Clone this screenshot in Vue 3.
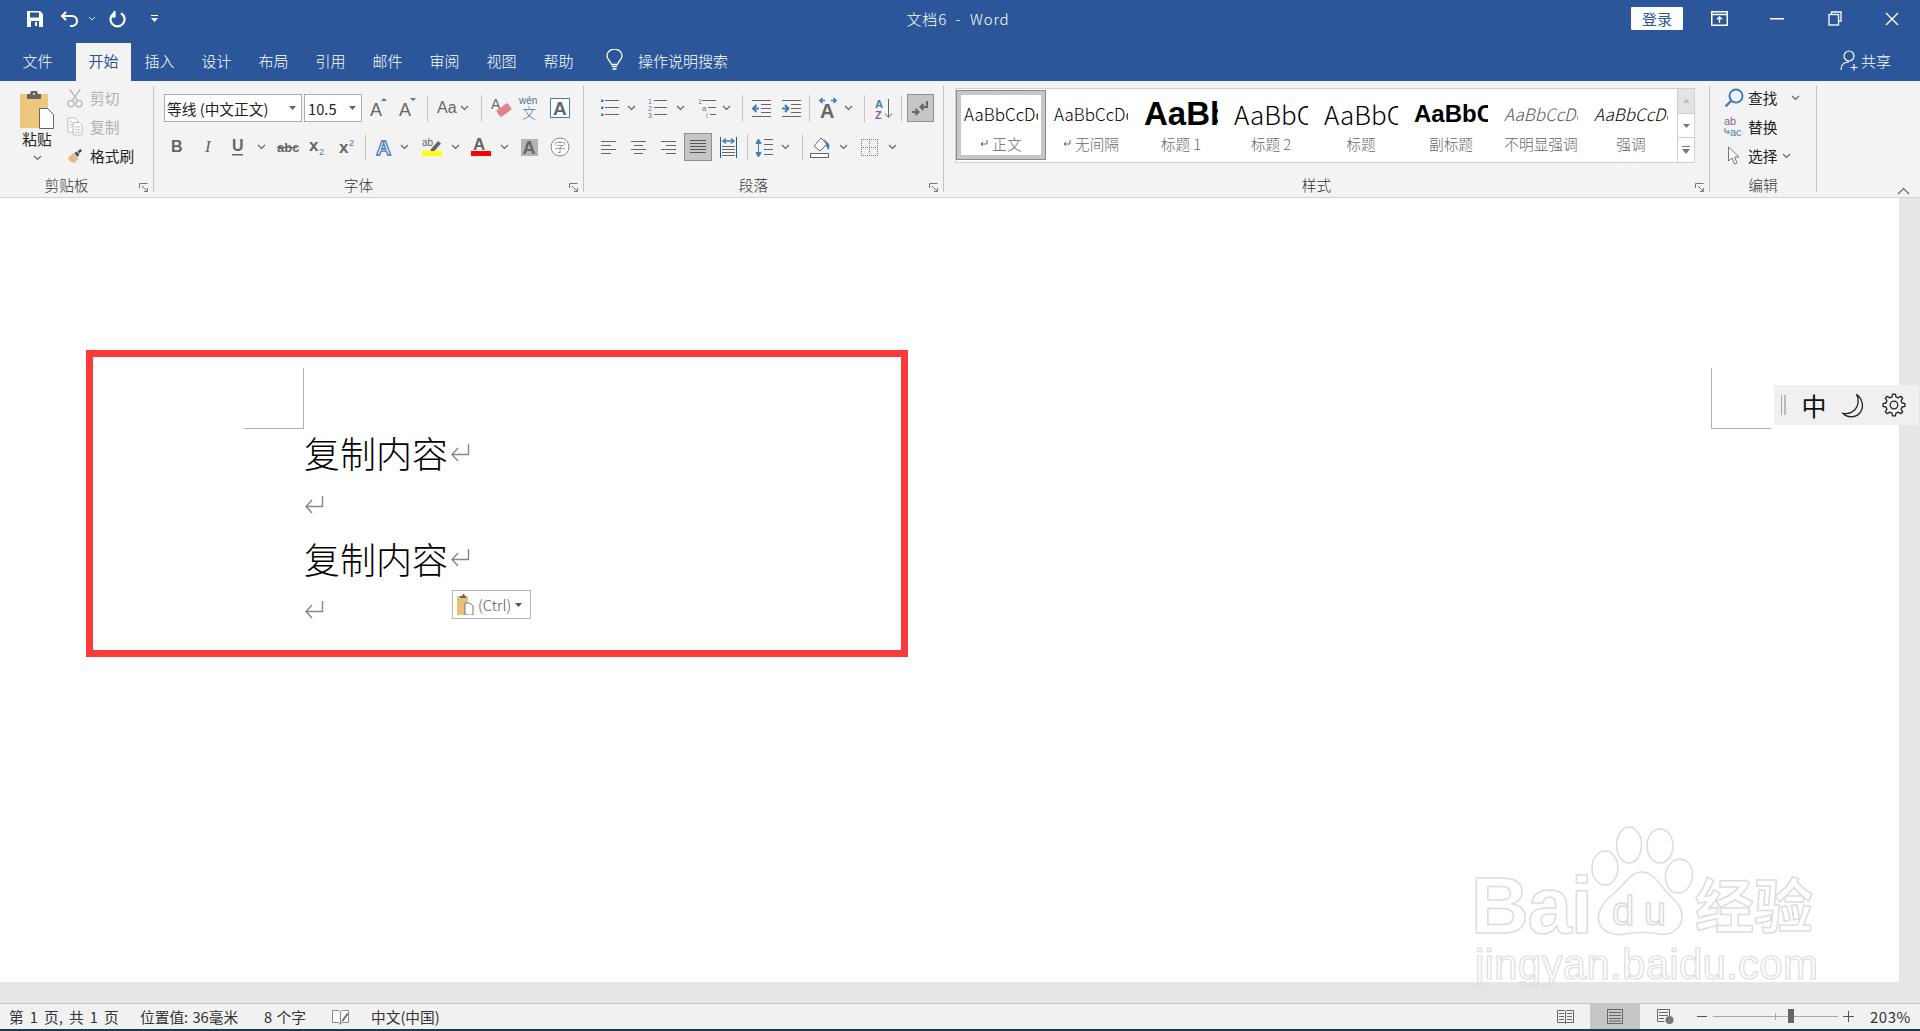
<script setup>
const G = '#666666'
const B = '#3f7cb8'
const SANS = 'Liberation Sans,sans-serif'
const T = (x, y, size, str, extra = '') =>
  `<text x="${x}" y="${y}" font-size="${size}" font-family="${SANS}" fill="${G}" ${extra}>${str}</text>`
const CJK = (x, y, size, str, fill = G) =>
  `<text x="${x}" y="${y}" font-size="${size}" font-family="Noto Sans CJK SC,sans-serif" fill="${fill}">${str}</text>`
const L = (arr, color = G) =>
  `<path d="${arr.map(([a, b, y]) => `M${a} ${y}.5H${b}`).join('')}" stroke="${color}" fill="none"/>`
const BOLD = 'font-weight="700"'

const icons = {
  chev: `<path d="M1 1l3.5 3.5L8 1" fill="none" stroke="#666" stroke-width="1.2"/>`,
  sep: `<rect width="1" height="27" fill="#c6c6c6"/>`,
  grow: T(2, 20, 18, 'A') + `<path d="M13 5l3-3 3 3z" fill="${B}"/>`,
  shrink: T(2, 20, 18, 'A') + `<path d="M13 2h6l-3 3z" fill="${B}"/>`,
  aa: T(4, 17, 16, 'Aa'),
  clear: T(2, 13, 14, 'A') + `<rect x="8" y="10" width="14" height="8" rx="1.5" fill="#ea7f8b" transform="rotate(-35 15 14)"/>`,
  phon: T(2, 8, 10, 'wén', `style="fill:#4d6f8f"`) + CJK(5, 22, 14, '文', B),
  boxa: `<rect x=".5" y=".5" width="19" height="19" fill="#fff" stroke="${B}"/>` + T(3, 17, 19, 'A', BOLD),
  b: T(0, 14, 16, 'B', BOLD),
  i: `<text x="1" y="14" font-size="17" font-style="italic" font-family="Liberation Serif,serif" fill="${G}">I</text>`,
  u: T(1, 13, 16, 'U', BOLD) + `<rect x="1" y="16" width="11" height="1.5" fill="${G}"/>`,
  abc: T(0, 14, 13, 'abc', BOLD) + `<rect y="9" width="20" height="1" fill="${G}"/>`,
  sub: T(0, 13, 17, 'x', BOLD) + T(10, 17, 9, '2', `style="fill:${B}"`),
  sup: T(0, 15, 17, 'x', BOLD) + T(10, 8, 9, '2', `style="fill:${B}"`),
  effect: `<text x="2" y="19" font-size="21" font-weight="700" font-family="${SANS}" fill="#fff" stroke="${B}" stroke-width="1.3">A</text>`,
  hl: T(0, 9, 10, 'ab') + `<path d="M9 12l7-8 3 2.5-7 8-4 1z" fill="${G}"/><rect y="14" width="20" height="5" fill="#ff0"/>`,
  color: T(2, 13, 17, 'A', BOLD) + `<rect y="14" width="20" height="5" fill="#f00"/>`,
  shade: `<rect width="17" height="17" fill="#b5b5b5"/>` + T(1.5, 15, 18, 'A', BOLD),
  circ: `<circle cx="10" cy="10" r="9" fill="#fff" stroke="#888"/>` + CJK(4, 14.5, 12, '字'),
  bullets: `<path d="M2 1.5h2.5v2.5H2zM2 8.5h2.5V11H2zM2 15.5h2.5V18H2z" fill="${B}"/>` + L([[6, 20, 2], [6, 20, 9], [6, 20, 16]]),
  num: T(1, 6, 7, '1', `style="fill:${B}"`) + T(1, 13, 7, '2', `style="fill:${B}"`) + T(1, 20, 7, '3', `style="fill:${B}"`) + L([[7, 20, 2], [7, 20, 9], [7, 20, 16]]),
  multi: T(0, 6, 7, '1', `style="fill:${B}"`) + T(4, 13, 8, 'a', `style="fill:${B}"`) + T(8, 20, 7, 'i', `style="fill:${B}"`) + L([[4, 18, 2], [10, 18, 9], [12, 18, 16]]),
  outdent: L([[0, 19, 1], [9, 19, 5], [9, 19, 9], [9, 19, 13], [0, 19, 17]]) + `<path d="M7 9.5H2M4.5 6L1 9.5 4.5 13" fill="none" stroke="${B}" stroke-width="2"/>`,
  indent: L([[0, 19, 1], [9, 19, 5], [9, 19, 9], [9, 19, 13], [0, 19, 17]]) + `<path d="M0 9.5h5M3 6l3.5 3.5L3 13" fill="none" stroke="${B}" stroke-width="2"/>`,
  cjk: `<path d="M3 3.5h5M14 3.5h5M5.5 1L3 3.5 5.5 6M16.5 1L19 3.5 16.5 6" fill="none" stroke="${B}" stroke-width="1.6"/>` + T(3, 21, 20, 'A', BOLD),
  sort: T(0, 10, 11, 'A', `style="fill:${B}" font-weight="700"`) + T(0, 21, 11, 'Z', `style="fill:#8a5aa8" font-weight="700"`) + `<path d="M13.5 1v18M10 15.5l3.5 4 3.5-4" fill="none" stroke="${G}"/>`,
  pil: `<rect x=".5" y=".5" width="26" height="27" fill="#c6c6c6" stroke="#8f8f8f"/><path d="M20 7v6h-6M16.5 10l-3 3 3 3" fill="none" stroke="#666" stroke-width="2"/><path d="M5 18h6M8.5 15l3 3-3 3" fill="none" stroke="#666" stroke-width="2"/>`,
  aleft: L([[0, 15, 1], [0, 10, 5], [0, 15, 9], [0, 10, 13]]),
  acenter: L([[0, 15, 1], [3, 12, 5], [0, 15, 9], [3, 12, 13]]),
  aright: L([[0, 15, 1], [5, 15, 5], [0, 15, 9], [5, 15, 13]]),
  just: `<rect x=".5" y=".5" width="27" height="27" fill="#c6c6c6" stroke="#8f8f8f"/>` + L([[6, 22, 7], [6, 22, 10], [6, 22, 13], [6, 22, 16], [6, 22, 19]], '#555'),
  dist: `<path d="M.5 0v21M16.5 0v21" stroke="#1f5a96"/><path d="M3 4h11M6 1.5L3 4l3 2.5M11 1.5L14 4l-3 2.5" fill="none" stroke="${B}" stroke-width="1.5"/>` + L([[2, 15, 9], [2, 15, 12], [2, 15, 15], [2, 15, 18]]),
  spacing: `<path d="M3.5 4v14M1 6.5L3.5 2 6 6.5zM1 15.5L3.5 20 6 15.5z" fill="${B}" stroke="${B}"/>` + L([[9, 18, 2], [9, 18, 7], [9, 18, 12], [9, 18, 17]]),
  fill: `<path d="M4 10l7-8 6 6-7 7z" fill="#fff" stroke="${G}"/><path d="M14 3l5 5c1 3 0 5-1 6l-2-5z" fill="${B}"/><rect x=".5" y="17.5" width="18" height="4" fill="#fff" stroke="${G}"/>`,
  border: `<path d="M.5 0v17M8.5 0v17M16.5 0v17M0 .5h17M0 8.5h17M0 16.5h17" stroke="#777" stroke-dasharray="1 1" fill="none"/>`
}

// A toolbar row is a list of tools with the centre of each; the gaps follow from it.
const row = (start, items) => {
  let x = start
  return items.map(([i, c, w = 20, h = 20]) => {
    const ml = c - w / 2 - x
    x = c + w / 2
    return { i, w, h, ml, key: i + c }
  })
}
const S = (c) => ['sep', c, 1, 27]
const C = (c) => ['chev', c, 9, 6]

const fontTop = row(362, [['grow', 379, 22, 24], ['shrink', 408, 22, 24], S(427), ['aa', 445, 24, 24], C(464), S(481), ['clear', 501, 24, 24], ['phon', 529, 24, 24], ['boxa', 560, 20, 20]])
const fontBottom = row(154, [['b', 177, 12, 18], ['i', 208, 8, 18], ['u', 237, 13, 18], C(261), ['abc', 287, 20, 18], ['sub', 317, 17, 18], ['sup', 347, 17, 18], S(365), ['effect', 384, 20, 22], C(404), ['hl', 432, 20, 20], C(455), ['color', 481, 20, 20], C(504), ['shade', 529, 17, 17], ['circ', 560, 20, 20]])
const paraTop = row(584, [['bullets', 609, 20, 20], C(631), ['num', 657, 20, 20], C(680), ['multi', 707, 18, 20], C(726), S(742), ['outdent', 761, 19, 19], ['indent', 791, 19, 19], S(809), ['cjk', 828, 22, 22], C(848), S(864), ['sort', 884, 18, 21], S(901), ['pil', 920, 27, 28]])
const paraBottom = row(584, [['aleft', 608, 15, 15], ['acenter', 638, 15, 15], ['aright', 668, 15, 15], ['just', 698, 28, 28], ['dist', 728, 17, 21], S(747), ['spacing', 764, 18, 21], C(785), S(802), ['fill', 820, 20, 22], C(843), ['border', 869, 17, 17], C(892)])

const tabs = ['插入', '设计', '布局', '引用', '邮件', '审阅', '视图', '帮助']
const styles = [
  { p: 'AaBbCcDc', l: '正文', cls: 'normal', ret: true, sel: true },
  { p: 'AaBbCcDc', l: '无间隔', cls: 'normal', ret: true },
  { p: 'AaBbC', l: '标题 1', cls: 'h1' },
  { p: 'AaBbC', l: '标题 2', cls: 'h2' },
  { p: 'AaBbC', l: '标题', cls: 'h2' },
  { p: 'AaBbC', l: '副标题', cls: 'sub' },
  { p: 'AaBbCcDc', l: '不明显强调', cls: 'subtle' },
  { p: 'AaBbCcDc', l: '强调', cls: 'em' }
]
const lines = ['复制内容', '', '复制内容', '']

const gearPath = (() => {
  const pts = []
  const st = Math.PI / 8
  for (let i = 0; i < 8; i++) {
    const a = (i / 8) * 2 * Math.PI
    for (const [k, r] of [[-0.62, 8.3], [-0.32, 11], [0.32, 11], [0.62, 8.3]]) {
      pts.push(`${(12 + r * Math.cos(a + k * st)).toFixed(2)} ${(12 + r * Math.sin(a + k * st)).toFixed(2)}`)
    }
  }
  return 'M' + pts.join('L') + 'Z'
})()
</script>

<template>
  <div class="app">
    <header class="blue">
      <div class="titlebar">
        <div class="qat">
          <svg class="q-save" width="18" height="18" viewBox="0 0 18 18"><path d="M1 1h13l3 3v13H1z" fill="#fff"/><rect x="4" y="2.5" width="9" height="5" fill="#2b579a"/><rect x="5" y="11" width="8" height="6" fill="#2b579a"/><rect x="9" y="12" width="2" height="4" fill="#fff"/></svg>
          <svg class="q-undo" width="20" height="18" viewBox="0 0 20 18"><path d="M6 2L2 6l4 4M2.5 6H12a5 5 0 0 1 0 10h-2" fill="none" stroke="#fff" stroke-width="2.2"/></svg>
          <svg class="q-chev" width="8" height="5" viewBox="0 0 8 5"><path d="M1 1l3 3 3-3" fill="none" stroke="#dfe6f0"/></svg>
          <svg class="q-redo" width="18" height="18" viewBox="0 0 18 18"><path d="M12 3.2A7 7 0 1 1 5.5 3M5.5 1v5.5H1" fill="none" stroke="#fff" stroke-width="2.2"/></svg>
          <svg class="q-more" width="7" height="8" viewBox="0 0 7 8"><path d="M0 .5h7" stroke="#fff"/><path d="M0 3h7L3.5 7z" fill="#fff"/></svg>
        </div>
        <div class="title">文档6&nbsp;&nbsp;-&nbsp;&nbsp;Word</div>
        <div class="winctl">
          <div class="signin">登录</div>
          <div class="wbtn"><svg width="17" height="15" viewBox="0 0 17 15"><rect x=".75" y=".75" width="15.5" height="13.5" fill="none" stroke="#fff" stroke-width="1.5"/><path d="M1 3.5h15" stroke="#fff" stroke-width="1.5"/><path d="M8.5 12V6.5M6 8.5l2.5-2.5L11 8.5" fill="none" stroke="#fff" stroke-width="1.3"/></svg></div>
          <div class="wbtn"><svg width="14" height="2" viewBox="0 0 14 2"><rect width="14" height="1.5" fill="#fff"/></svg></div>
          <div class="wbtn"><svg width="14" height="15" viewBox="0 0 14 15"><path d="M3.5 3V1h9.5v9h-2.5" fill="none" stroke="#fff" stroke-width="1.3"/><rect x="1" y="3.5" width="9.5" height="10.5" fill="none" stroke="#fff" stroke-width="1.3"/></svg></div>
          <div class="wbtn"><svg width="14" height="14" viewBox="0 0 14 14"><path d="M1 1l12 12M13 1L1 13" stroke="#fff" stroke-width="1.4"/></svg></div>
        </div>
      </div>
      <nav class="tabs">
        <div class="tab first">文件</div>
        <div class="tab active">开始</div>
        <div v-for="t in tabs" :key="t" class="tab">{{ t }}</div>
        <div class="tell">
          <svg width="17" height="23" viewBox="0 0 17 23"><path d="M5.5 15.5C5 12 1 11 1 7a7.5 7 0 0 1 15 0c0 4-4 5-4.5 8.5z" fill="none" stroke="#fff" stroke-width="1.3"/><path d="M6 17.5h5M6.5 20h4" stroke="#fff" stroke-width="1.5"/></svg>
          <span>操作说明搜索</span>
        </div>
        <div class="share">
          <svg width="19" height="21" viewBox="0 0 19 21"><circle cx="9" cy="6" r="5" fill="none" stroke="#fff" stroke-width="1.2"/><path d="M1 20c0-5 3-8 8-8" fill="none" stroke="#fff" stroke-width="1.2"/><path d="M14 14v6.5M10.5 17.5h7" stroke="#fff" stroke-width="1.2"/></svg>
          <span>共享</span>
        </div>
      </nav>
    </header>

    <section class="ribbon">
      <div class="group g-clip">
        <div class="gbody clip">
          <div class="paste">
            <svg width="34" height="39" viewBox="0 0 34 39"><rect y="4" width="28" height="34" rx="1" fill="#eec67e"/><path d="M7 4h3l1-3h6l1 3h3v5H7z" fill="#666"/><rect x="13" y="3" width="2" height="2" fill="#eec67e"/><path d="M19.5 18.5h8l6 6v14h-14z" fill="#fff" stroke="#666"/></svg>
            <span class="paste-t">粘贴</span>
            <svg width="9" height="6" viewBox="0 0 9 6"><path d="M1 1l3.5 3.5L8 1" fill="none" stroke="#666" stroke-width="1.2"/></svg>
          </div>
          <div class="clip-list">
            <div class="clip-i off">
              <span class="ci"><svg width="18" height="22" viewBox="0 0 18 22"><path d="M3 1l9 13M15 1L6 14" stroke="#b9b9b9" stroke-width="1.6"/><circle cx="4.5" cy="17.5" r="3.5" fill="none" stroke="#b9b9b9" stroke-width="1.5"/><circle cx="13.5" cy="17.5" r="3.5" fill="none" stroke="#b9b9b9" stroke-width="1.5"/></svg></span>
              <span>剪切</span>
            </div>
            <div class="clip-i off">
              <span class="ci"><svg width="18" height="21" viewBox="0 0 18 21"><path d="M1 1h8l3 3v2H7v11H1z" fill="#fff" stroke="#b9b9b9"/><path d="M7 6h7l3 3v11H7z" fill="#fff" stroke="#b9b9b9"/><path d="M3 5h3M3 8h3M3 11h3M9 11h6M9 14h6M9 17h6" stroke="#b9b9b9"/></svg></span>
              <span>复制</span>
            </div>
            <div class="clip-i">
              <span class="ci"><svg width="18" height="18" viewBox="0 0 18 18"><path d="M1 11l6-5 6 6-5 5c-2 0-6-3-7-6z" fill="#e0bd80"/><path d="M8 6l3-2 3 3-2 3z" fill="#555"/><path d="M12 4l3-3 2 2-3 3z" fill="#444"/></svg></span>
              <span>格式刷</span>
            </div>
          </div>
        </div>
        <div class="glabel"><span>剪贴板</span><i class="launch"><svg width="9" height="9" viewBox="0 0 9 9"><path d="M.5 5V.5H8.5M3 3l5 5M5 8.5h3.5V5" fill="none" stroke="#777"/></svg></i></div>
      </div>
      <div class="gsep"></div>

      <div class="group g-font">
        <div class="gbody">
          <div class="row first">
            <div class="combo cfont"><span>等线 (中文正文)</span><svg width="7" height="4" viewBox="0 0 7 4"><path d="M0 0h7L3.5 4z" fill="#666"/></svg></div>
            <div class="combo csize"><span>10.5</span><svg width="7" height="4" viewBox="0 0 7 4"><path d="M0 0h7L3.5 4z" fill="#666"/></svg></div>
            <svg v-for="t in fontTop" :key="t.key" class="tool" :width="t.w" :height="t.h" :viewBox="`0 0 ${t.w} ${t.h}`" :style="{ marginLeft: t.ml + 'px' }" v-html="icons[t.i]"></svg>
          </div>
          <div class="row">
            <svg v-for="t in fontBottom" :key="t.key" class="tool" :width="t.w" :height="t.h" :viewBox="`0 0 ${t.w} ${t.h}`" :style="{ marginLeft: t.ml + 'px' }" v-html="icons[t.i]"></svg>
          </div>
        </div>
        <div class="glabel"><span>字体</span><i class="launch"><svg width="9" height="9" viewBox="0 0 9 9"><path d="M.5 5V.5H8.5M3 3l5 5M5 8.5h3.5V5" fill="none" stroke="#777"/></svg></i></div>
      </div>
      <div class="gsep"></div>

      <div class="group g-para">
        <div class="gbody">
          <div class="row">
            <svg v-for="t in paraTop" :key="t.key" class="tool" :width="t.w" :height="t.h" :viewBox="`0 0 ${t.w} ${t.h}`" :style="{ marginLeft: t.ml + 'px' }" v-html="icons[t.i]"></svg>
          </div>
          <div class="row">
            <svg v-for="t in paraBottom" :key="t.key" class="tool" :width="t.w" :height="t.h" :viewBox="`0 0 ${t.w} ${t.h}`" :style="{ marginLeft: t.ml + 'px' }" v-html="icons[t.i]"></svg>
          </div>
        </div>
        <div class="glabel"><span>段落</span><i class="launch"><svg width="9" height="9" viewBox="0 0 9 9"><path d="M.5 5V.5H8.5M3 3l5 5M5 8.5h3.5V5" fill="none" stroke="#777"/></svg></i></div>
      </div>
      <div class="gsep"></div>

      <div class="group g-styles">
        <div class="gbody">
          <div class="gallery">
            <div class="items">
              <div v-for="s in styles" :key="s.l" class="item" :class="{ sel: s.sel }">
                <div class="preview" :class="s.cls">{{ s.p }}</div>
                <div class="slabel">
                  <svg v-if="s.ret" width="8" height="7" viewBox="0 0 8 7"><path d="M7 0v4H1M3 2L1 4l2 2" fill="none" stroke="#666"/></svg>
                  <span>{{ s.l }}</span>
                </div>
              </div>
            </div>
            <div class="spin">
              <div class="sp off"><svg width="7" height="4" viewBox="0 0 7 4"><path d="M0 4h7L3.5 0z" fill="#bdbdbd"/></svg></div>
              <div class="sp"><svg width="7" height="4" viewBox="0 0 7 4"><path d="M0 0h7L3.5 4z" fill="#777"/></svg></div>
              <div class="sp"><svg width="8" height="8" viewBox="0 0 8 8"><path d="M0 .5h8" stroke="#777"/><path d="M0 3h8L4 8z" fill="#777"/></svg></div>
            </div>
          </div>
        </div>
        <div class="glabel"><span>样式</span><i class="launch"><svg width="9" height="9" viewBox="0 0 9 9"><path d="M.5 5V.5H8.5M3 3l5 5M5 8.5h3.5V5" fill="none" stroke="#777"/></svg></i></div>
      </div>
      <div class="gsep"></div>

      <div class="group g-edit">
        <div class="gbody edit">
          <div class="edit-i">
            <span class="ei"><svg width="20" height="20" viewBox="0 0 20 20"><circle cx="12" cy="8" r="6.5" fill="none" stroke="#3f7cb8" stroke-width="2"/><path d="M7.5 12.5L1.5 18.5" stroke="#3f7cb8" stroke-width="2.4"/></svg></span>
            <span>查找</span>
            <svg class="e-ch1" width="9" height="6" viewBox="0 0 9 6"><path d="M1 1l3.5 3.5L8 1" fill="none" stroke="#666" stroke-width="1.2"/></svg>
          </div>
          <div class="edit-i">
            <span class="ei"><svg width="20" height="20" viewBox="0 0 20 20"><text x="0" y="8" font-size="11" font-family="Liberation Sans,sans-serif" fill="#8a5aa8">ab</text><text x="6" y="19" font-size="11" font-family="Liberation Sans,sans-serif" fill="#3f7cb8">ac</text><path d="M1 11v4h4M3.5 13l2 2-2 2" fill="none" stroke="#3f7cb8"/></svg></span>
            <span>替换</span>
          </div>
          <div class="edit-i">
            <span class="ei"><svg width="14" height="20" viewBox="0 0 14 20"><path d="M1.5 1v14l3.5-3 2.5 6 2.5-1-2.5-6H12z" fill="#fff" stroke="#777"/></svg></span>
            <span>选择</span>
            <svg class="e-ch2" width="9" height="6" viewBox="0 0 9 6"><path d="M1 1l3.5 3.5L8 1" fill="none" stroke="#666" stroke-width="1.2"/></svg>
          </div>
        </div>
        <div class="glabel"><span>编辑</span></div>
      </div>
      <div class="gsep"></div>

      <div class="group g-rest">
        <svg class="collapse" width="13" height="8" viewBox="0 0 13 8"><path d="M1 7l5.5-5.5L12 7" fill="none" stroke="#666" stroke-width="1.1"/></svg>
      </div>
    </section>

    <main class="workspace">
      <div class="canvas">
        <div class="mark mark-left"></div>
        <div class="mark mark-right"></div>
        <div class="page">
          <div v-for="(t, n) in lines" :key="n" class="line">
            <span>{{ t }}</span>
            <svg :class="{ tail: t }" width="20" height="19" viewBox="0 0 20 19"><path d="M18.5 0v10.5H2M8 4l-6 6.5L8 17" fill="none" stroke="#888" stroke-width="1.4"/></svg>
          </div>
        </div>
      </div>
      <div class="vtrack"></div>
    </main>
    <div class="htrack"></div>

    <footer class="status">
      <div class="st-left">
        <span class="s1">第 1 页, 共 1 页</span>
        <span class="s2">位置值: 36毫米</span>
        <span class="s3">8 个字</span>
        <svg class="s4" width="17" height="16" viewBox="0 0 17 16"><path d="M.5 1.5h6l2 1.5v12l-2-1.5h-6zM8.5 3l2-1.5h6v12h-6l-2 1.5" fill="#fff" stroke="#888"/><path d="M10 11l5-7 1.5 1-5 7-2 1z" fill="#666"/></svg>
        <span>中文(中国)</span>
      </div>
      <div class="st-right">
        <div class="view"><svg width="17" height="14" viewBox="0 0 17 14"><path d="M.5.5h7l1 1 1-1h7v12h-7l-1 1-1-1h-7z" fill="none" stroke="#666"/><path d="M8.5 1v12M2 3.5h5M2 6.5h5M2 9.5h5M10 3.5h5M10 6.5h5M10 9.5h5" stroke="#666"/></svg></div>
        <div class="view on"><svg width="16" height="15" viewBox="0 0 16 15"><rect x=".5" y=".5" width="15" height="14" fill="none" stroke="#666"/><path d="M2 3.5h12M2 6.5h12M2 9.5h12M2 12h12" stroke="#666"/></svg></div>
        <div class="view"><svg width="17" height="15" viewBox="0 0 17 15"><path d="M.5.5h12v8M.5.5v12h7" fill="none" stroke="#666"/><path d="M2 3.5h9M2 6.5h9M2 9.5h5" stroke="#666"/><circle cx="12.5" cy="11" r="4" fill="#777"/></svg></div>
        <div class="zbtn"><svg width="10" height="1" viewBox="0 0 10 1"><rect width="10" height="1" fill="#555"/></svg></div>
        <div class="ztrack"><i class="ztick"></i><i class="zthumb"></i></div>
        <div class="zbtn plus"><svg width="11" height="11" viewBox="0 0 11 11"><path d="M0 5.5h11M5.5 0v11" stroke="#555"/></svg></div>
        <div class="pct">203%</div>
      </div>
    </footer>
    <div class="edge"></div>

    <div class="callout"></div>

    <div class="pasteopt">
      <svg width="17" height="21" viewBox="0 0 17 21"><rect y="2" width="11" height="19" fill="#e8c076"/><path d="M3 2h2l1-2h1l1 2h1v2H3z" fill="#666"/><path d="M8 9h5l3 3v9H8z" fill="#fff" stroke="#777"/></svg>
      <span>(Ctrl)</span>
      <svg width="7" height="4" viewBox="0 0 7 4"><path d="M0 0h7L3.5 4z" fill="#555"/></svg>
    </div>

    <div class="ime">
      <i class="handle"></i>
      <span class="zh">中</span>
      <svg width="24" height="26" viewBox="1 0 20 22"><path d="M14 2c5 4 7 11 2.5 16C13 22 6 22 2.5 18c5 1 10-1 12-6 1.5-3.5 1-7-.5-10z" fill="none" stroke="#222" stroke-width="1.1"/></svg>
      <svg width="24" height="24" viewBox="0 0 24 24"><path :d="gearPath" fill="none" stroke="#222" stroke-width="1.3" stroke-linejoin="round"/><circle cx="12" cy="12" r="3.8" fill="none" stroke="#222" stroke-width="1.3"/></svg>
    </div>

    <svg class="wm" width="360" height="170" viewBox="1470 830 360 170">
      <g class="wm-s">
        <ellipse cx="1629" cy="845" rx="12.5" ry="18"/>
        <ellipse cx="1660" cy="846" rx="13" ry="17"/>
        <ellipse cx="1605" cy="868" rx="13" ry="17"/>
        <ellipse cx="1679" cy="876" rx="13.5" ry="17" transform="rotate(8 1679 876)"/>
        <path d="M1642 872C1630 872 1625 885 1612 895C1600 905 1597 915 1599 922C1602 933 1615 936 1625 934C1635 932 1650 932 1660 934C1672 936 1682 928 1682 916C1682 905 1672 898 1665 890C1658 882 1652 872 1642 872Z"/>
        <text x="1471" y="933" font-size="80" font-weight="700" font-family="Liberation Sans,sans-serif" textLength="122">Bai</text>
        <text x="1612" y="925" font-size="40" font-family="Liberation Sans,sans-serif" textLength="54">du</text>
        <text x="1695" y="928" font-size="59" font-weight="700" font-family="Noto Sans CJK SC,sans-serif">经验</text>
      </g>
      <text class="wm-u" x="1475" y="979" font-size="42" font-family="Liberation Sans,sans-serif" textLength="343">jingyan.baidu.com</text>
    </svg>
  </div>
</template>

<style scoped>
.app {
  position: relative;
  display: flex;
  flex-direction: column;
  width: 1920px;
  height: 1031px;
  overflow: hidden;
  background: #fff;
  color: #3a3a3a;
  font-family: "Noto Sans CJK SC", "Liberation Sans", sans-serif;
  font-size: 14.7px;
  font-weight: 300;
}

/* title bar and tabs */
.blue { background: #2b579a; height: 81px; color: #fff; flex: none; }
.titlebar { display: grid; grid-template-columns: 1fr auto 1fr; height: 37px; align-items: center; }
.qat { display: flex; align-items: center; }
.q-save { margin-left: 26px; }
.q-undo { margin-left: 16px; }
.q-chev { margin-left: 8px; }
.q-redo { margin-left: 13px; }
.q-more { margin-left: 24px; }
.title { font-size: 15px; margin-left: -4px; letter-spacing: .9px; }
.winctl { display: flex; align-items: center; justify-content: flex-end; margin-right: -1px; }
.signin { width: 52px; height: 23px; line-height: 24px; background: #fff; color: #2b579a; text-align: center; border-radius: 1px; margin-right: 8px; font-size: 15px; font-weight: 400; }
.wbtn { width: 57.5px; display: flex; justify-content: center; }
.tabs { display: flex; height: 38px; margin-top: 6px; padding-left: 9px; align-items: stretch; }
.tab { width: 57px; display: flex; align-items: center; justify-content: center; font-size: 15px; padding-bottom: 3px; box-sizing: border-box; }
.tab.first { margin-right: 10px; }
.tab.active { width: 55px; background: #f3f3f3; color: #2b579a; font-weight: 400; }
.tell { display: flex; align-items: center; margin-left: 19px; font-size: 15px; padding-bottom: 3px; }
.tell span { margin-left: 15px; }
.share { display: flex; align-items: center; margin-left: auto; margin-right: 29px; gap: 2px; font-size: 15px; padding-bottom: 3px; }

/* ribbon */
.ribbon { display: flex; height: 117px; flex: none; background: #f3f3f3; border-bottom: 1px solid #d2d2d2; box-sizing: border-box; }
.group { display: flex; flex-direction: column; flex: none; }
.g-clip { width: 153px; }
.g-font { width: 429px; }
.g-para { width: 359px; }
.g-styles { width: 765px; }
.g-edit { width: 106px; }
.g-rest { flex: 1; align-items: flex-end; justify-content: flex-end; padding: 0 10px 2px 0; }
.gsep { width: 1px; margin: 5px 0; background: #c2c2c2; flex: none; }
.gbody { height: 93px; flex: none; }
.glabel { display: flex; height: 20px; align-items: center; }
.glabel span { flex: 1; text-align: center; color: #333; }
.launch { width: 20px; display: flex; justify-content: center; align-items: flex-end; padding-top: 6px; }
.row { display: flex; align-items: center; height: 28px; margin-top: 11px; }
.row.first, .g-para .row:first-child { margin-top: 13px; }
.tool { flex: none; overflow: visible; }

.clip { display: flex; }
.paste { width: 60px; margin-left: 7px; padding-top: 9px; display: flex; flex-direction: column; align-items: center; flex: none; }
.paste-t { line-height: 20px; color: #222; font-weight: 400; }
.paste svg:last-child { margin-top: 6px; }
.clip-list { padding-top: 2px; }
.clip-i { display: flex; align-items: center; height: 29px; gap: 7px; color: #222; font-weight: 400; }
.clip-i.off { color: #b0b0b0; }
.ci { width: 16px; display: flex; justify-content: center; flex: none; }

.combo { height: 28px; background: #fff; border: 1px solid #ababab; box-sizing: border-box; display: flex; align-items: center; justify-content: space-between; padding: 0 5px 0 2px; color: #222; flex: none; font-weight: 400; }
.cfont { width: 138px; margin-left: 10px; }
.csize { width: 58px; margin-left: 2px; padding-left: 3px; }

.g-styles .gbody { padding: 7px 0 0 11px; box-sizing: border-box; }
.gallery { display: flex; width: 740px; height: 75px; border: 1px solid #cfcfcf; box-sizing: border-box; background: #fff; }
.items { display: flex; width: 721px; flex: none; }
.item { position: relative; width: 90px; flex: none; display: flex; flex-direction: column; align-items: center; }
.item.sel::before { content: ""; position: absolute; inset: 1px 0 2px; border: 1px solid #8a8a8a; box-shadow: inset 0 0 0 4px #c6c6c6; }
.preview { width: 74px; height: 36px; margin-top: 7px; margin-bottom: 1px; line-height: 36px; overflow: hidden; white-space: nowrap; font-family: "Liberation Sans", sans-serif; color: #000; font-weight: 400; position: relative; }
.normal { font-size: 17px; font-family: "Noto Sans CJK SC", sans-serif; font-weight: 300; }
.h1 { font-size: 33px; font-weight: 700; }
.h2 { font-size: 26px; font-family: "Noto Sans CJK SC", sans-serif; font-weight: 300; }
.sub { font-size: 24px; font-weight: 700; }
.subtle { font-size: 17px; font-style: italic; color: #555; font-family: "Noto Sans CJK SC", sans-serif; font-weight: 300; }
.em { font-size: 17px; font-style: italic; font-family: "Noto Sans CJK SC", sans-serif; font-weight: 300; }
.slabel { height: 20px; display: flex; align-items: center; gap: 4px; color: #666; position: relative; white-space: nowrap; }
.spin { flex: 1; border-left: 1px solid #cfcfcf; display: flex; flex-direction: column; }
.sp { flex: 1; display: flex; align-items: center; justify-content: center; border-bottom: 1px solid #cfcfcf; }
.sp:last-child { border-bottom: 0; }
.sp.off { background: #e3e3e3; }

.edit { padding-top: 2px; box-sizing: border-box; }
.edit-i { display: flex; align-items: center; height: 29px; color: #222; font-weight: 400; }
.ei { width: 38px; padding-left: 10px; box-sizing: border-box; display: flex; justify-content: center; flex: none; }
.e-ch1 { margin-left: 13.5px; }
.e-ch2 { margin-left: 4.5px; }

/* document */
.workspace { display: flex; flex: 1; min-height: 0; }
.canvas { position: relative; flex: 1; background: #fff; }
.vtrack { width: 21px; background: #e6e6e6; flex: none; }
.htrack { height: 21px; background: #e6e6e6; flex: none; }
.page { padding: 228px 0 0 304px; }
.line { display: flex; align-items: center; height: 52.7px; font-size: 36px; color: #000; }
.line .tail { margin: 2px 0 0 2px; }
.mark { position: absolute; top: 170px; width: 60px; height: 61px; box-sizing: border-box; border-bottom: 1px solid #b0b0b0; }
.mark-left { left: 244px; border-right: 1px solid #b0b0b0; }
.mark-right { left: 1711px; border-left: 1px solid #b0b0b0; }

/* status bar */
.status { display: flex; justify-content: space-between; height: 26px; flex: none; background: #f1f1f1; border-top: 1px solid #c6c6c6; box-sizing: border-box; font-size: 14.7px; color: #333; font-weight: 400; }
.edge { height: 2px; background: #1d3a4d; flex: none; }
.st-left { display: flex; align-items: center; padding-left: 9px; white-space: nowrap; }
.s1 { width: 131px; word-spacing: 2.8px; }
.s2 { width: 124px; word-spacing: 1px; }
.s3 { width: 68px; word-spacing: 1px; }
.s4 { margin-right: 22px; }
.st-right { display: flex; align-items: stretch; width: 380px; }
.view { width: 50px; display: flex; align-items: center; justify-content: center; }
.view.on { background: #c6c6c6; }
.zbtn { width: 23px; display: flex; align-items: center; justify-content: center; }
.zbtn.plus { width: 20px; }
.ztrack { position: relative; width: 125px; align-self: center; height: 1px; background: #a8a8a8; }
.ztick { position: absolute; left: 62px; top: -3px; width: 1px; height: 7px; background: #a8a8a8; }
.zthumb { position: absolute; left: 75px; top: -7px; width: 6px; height: 14px; background: #666; }
.pct { flex: 1; padding-left: 12px; display: flex; align-items: center; font-size: 15px; letter-spacing: .5px; }

/* overlays */
.callout { position: absolute; left: 86px; top: 350px; width: 822px; height: 307px; border: 7px solid #fd3a3a; box-sizing: border-box; pointer-events: none; }
.pasteopt { position: absolute; left: 452px; top: 590px; width: 79px; height: 29px; box-sizing: border-box; background: #fff; border: 1px solid #b5b5b5; display: flex; align-items: center; padding-left: 4px; gap: 4px; color: #555; font-family: "Noto Sans CJK SC", sans-serif; font-weight: 300; font-size: 15px; }
.ime { position: absolute; left: 1774px; top: 385px; width: 145px; height: 40px; background: #f0f0f0; display: flex; align-items: center; }
.handle { width: 5px; height: 20px; margin-left: 7px; border-left: 1px solid #aaa; border-right: 2px solid #bbb; box-sizing: border-box; }
.zh { margin-left: 15.5px; font-size: 25px; line-height: 1; font-weight: 400; color: #111; }
.ime svg:nth-of-type(1) { margin-left: 14.5px; }
.ime svg:nth-of-type(2) { margin-left: 17px; }
.wm { position: absolute; left: 1470px; top: 830px; pointer-events: none; overflow: visible; }
.wm-s { fill: #fff; stroke: #dcdcdc; stroke-width: 1.5; }
.wm-u { fill: none; stroke: #dedede; stroke-width: 1.2; }
</style>

<style>
html, body { margin: 0; overflow: hidden; }
</style>
